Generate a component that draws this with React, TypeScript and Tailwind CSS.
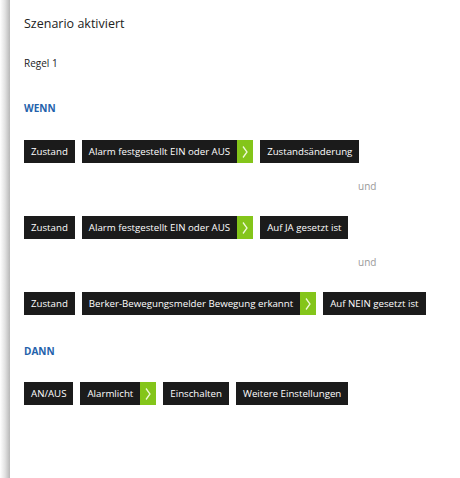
import React from "react";

const font = { fontFamily: '"Open Sans", "Liberation Sans", sans-serif' };

function Chip({ label, arrow = false }: { label: string; arrow?: boolean }) {
  return (
    <div className="flex h-[23px]">
      <div className="flex items-center bg-[#1b1b1b] px-[7px] text-[9.7px] leading-none text-white whitespace-nowrap">
        {label}
      </div>
      {arrow && (
        <div className="flex w-[16px] items-center justify-center bg-[#84c51a]">
          <svg width="8" height="14" viewBox="0 0 8 14">
            <polyline points="2,1.5 6,7 2,12.5" fill="none" stroke="#eef8d8" strokeWidth="1.3" />
          </svg>
        </div>
      )}
    </div>
  );
}

function Row({ children }: { children: React.ReactNode }) {
  return <div className="flex gap-[7px]">{children}</div>;
}

function Und() {
  return (
    <div className="h-[14px] pl-[334px] text-[10px] leading-[14px] text-[#9a9a9a]">und</div>
  );
}

export default function App() {
  return (
    <div className="flex h-[478px] w-[460px] bg-white" style={font}>
      <div className="h-full w-[10px] bg-gradient-to-r from-white via-[#e2e2e2] to-[#b8b8b8]" />
      <div className="flex flex-1 flex-col pl-[14px]">
        <div className="mt-[16px] h-[16px] text-[12.5px] leading-[16px] text-[#222]">Szenario aktiviert</div>
        <div className="mt-[24px] h-[14px] text-[10px] leading-[14px] text-[#222]">Regel 1</div>
        <div className="mt-[31px] h-[14px] text-[10px] font-bold leading-[14px] text-[#2462ab]">WENN</div>
        <div className="mt-[25px]">
          <Row>
            <Chip label="Zustand" />
            <Chip label="Alarm festgestellt EIN oder AUS" arrow />
            <Chip label="Zustandsänderung" />
          </Row>
        </div>
        <div className="mt-[16px]">
          <Und />
        </div>
        <div className="mt-[23px]">
          <Row>
            <Chip label="Zustand" />
            <Chip label="Alarm festgestellt EIN oder AUS" arrow />
            <Chip label="Auf JA gesetzt ist" />
          </Row>
        </div>
        <div className="mt-[16px]">
          <Und />
        </div>
        <div className="mt-[23px]">
          <Row>
            <Chip label="Zustand" />
            <Chip label="Berker-Bewegungsmelder Bewegung erkannt" arrow />
            <Chip label="Auf NEIN gesetzt ist" />
          </Row>
        </div>
        <div className="mt-[29px] h-[14px] text-[10px] font-bold leading-[14px] text-[#2462ab]">DANN</div>
        <div className="mt-[24px]">
          <Row>
            <Chip label="AN/AUS" />
            <Chip label="Alarmlicht" arrow />
            <Chip label="Einschalten" />
            <Chip label="Weitere Einstellungen" />
          </Row>
        </div>
      </div>
    </div>
  );
}
